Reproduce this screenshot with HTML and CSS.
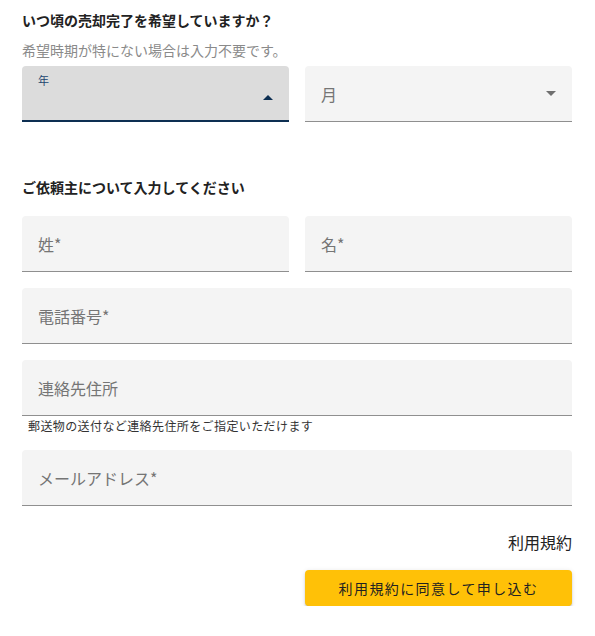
FILE: index.html
```html
<!DOCTYPE html>
<html lang="ja">
<head>
<meta charset="utf-8">
<link rel="stylesheet" href="styles.css">
</head>
<body>
<div class="page">
  <h2 class="title">いつ頃の売却完了を希望していますか？</h2>
  <p class="note">希望時期が特にない場合は入力不要です。</p>
  <div class="row">
    <div class="field select focused">
      <span class="label small">年</span>
      <svg class="caret" width="10" height="5" viewBox="0 0 10 5"><path d="M0 5L5 0L10 5Z" fill="#0d2f52"/></svg>
    </div>
    <div class="field select">
      <span class="label">月</span>
      <svg class="caret" width="10" height="5" viewBox="0 0 10 5"><path d="M0 0L5 5L10 0Z" fill="#6f6f6f"/></svg>
    </div>
  </div>

  <h2 class="title section">ご依頼主について入力してください</h2>
  <div class="row">
    <div class="field"><span class="label">姓*</span></div>
    <div class="field"><span class="label">名*</span></div>
  </div>
  <div class="field full"><span class="label">電話番号*</span></div>
  <div class="field full"><span class="label">連絡先住所</span></div>
  <p class="helper">郵送物の送付など連絡先住所をご指定いただけます</p>
  <div class="field full email"><span class="label">メールアドレス*</span></div>

  <div class="terms"><a class="terms-link">利用規約</a></div>
  <div class="actions"><button class="submit">利用規約に同意して申し込む</button></div>
</div>
</body>
</html>
```

FILE: styles.css
```css
* { box-sizing: border-box; }
html, body { margin: 0; padding: 0; background: #fff; }
body {
  font-family: "Noto Sans CJK JP", "Noto Sans", "Liberation Sans", sans-serif;
  color: #222;
}
.page {
  width: 595px;
  padding: 10px 23px 0 22px;
}
.title {
  margin: 0;
  font-size: 14px;
  line-height: 20px;
  font-weight: 700;
  color: #222;
}
.note {
  margin: 10px 0 6px;
  font-size: 14px;
  line-height: 20px;
  color: #8a8a8a;
}
.row {
  display: flex;
  gap: 16px;
}
.row .field { flex: 1; }
.field {
  position: relative;
  height: 56px;
  background: #f4f4f4;
  border-radius: 4px 4px 0 0;
  border-bottom: 1px solid #8f8f8f;
  display: flex;
  align-items: center;
  padding: 0 16px;
}
.label {
  font-size: 16px;
  color: #757575;
  line-height: 20px;
}
.field.focused {
  background: #dcdcdc;
  border-bottom: 2px solid #0d2f52;
}
.label.small {
  position: absolute;
  top: 7px;
  left: 16px;
  font-size: 11px;
  line-height: 14px;
  color: #1d4670;
}
.caret {
  position: absolute;
  right: 16px;
  top: 29px;
}
.select:not(.focused) .caret { top: 25px; }
.section { margin-top: 55px; margin-bottom: 19px; }
.full { margin-top: 16px; }
.helper {
  margin: 2px 0 0 6px;
  font-size: 12px;
  letter-spacing: 0.4px;
  line-height: 16px;
  color: #333;
}
.email { margin-top: 16px; }
.terms {
  display: flex;
  justify-content: flex-end;
  margin-top: 24px;
}
.terms-link {
  font-size: 16px;
  line-height: 24px;
  color: #222;
}
.actions {
  display: flex;
  justify-content: flex-end;
  margin-top: 16px;
}
.submit {
  width: 267px;
  height: 36px;
  border: none;
  border-radius: 4px;
  background: #ffc107;
  font-family: inherit;
  font-size: 14px;
  letter-spacing: 1.4px;
  color: #222;
  box-shadow: 0 3px 1px -2px rgba(0,0,0,0.2), 0 2px 2px 0 rgba(0,0,0,0.14), 0 1px 5px 0 rgba(0,0,0,0.12);
}
```
